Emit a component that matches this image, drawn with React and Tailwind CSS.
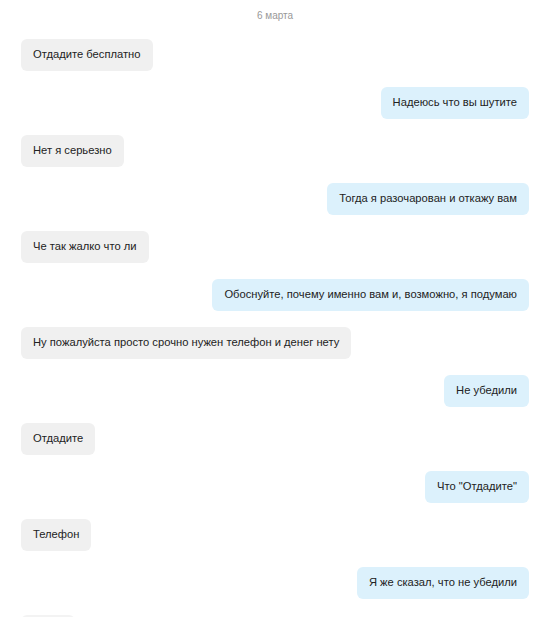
const messages = [
  { text: 'Отдадите бесплатно', mine: false },
  { text: 'Надеюсь что вы шутите', mine: true },
  { text: 'Нет я серьезно', mine: false },
  { text: 'Тогда я разочарован и откажу вам', mine: true },
  { text: 'Че так жалко что ли', mine: false },
  { text: 'Обоснуйте, почему именно вам и, возможно, я подумаю', mine: true },
  { text: 'Ну пожалуйста просто срочно нужен телефон и денег нету', mine: false },
  { text: 'Не убедили', mine: true },
  { text: 'Отдадите', mine: false },
  { text: 'Что "Отдадите"', mine: true },
  { text: 'Телефон', mine: false },
  { text: 'Я же сказал, что не убедили', mine: true },
]

const Bubble = ({ text, mine }) => (
  <div className={mine ? 'flex justify-end' : 'flex justify-start'}>
    <div
      className={
        'h-8 px-3 flex items-center rounded-md text-[11.2px] leading-none text-[#222] ' +
        (mine ? 'bg-[#dcf1fc]' : 'bg-[#f0f0f0]')
      }
    >
      {text}
    </div>
  </div>
)

export default function App() {
  return (
    <div className="w-[550px] h-[617px] overflow-hidden bg-white font-['Liberation_Sans',Arial,sans-serif]">
      <div className="pt-[10px] text-center text-[10px] leading-[12px] text-[#999]">6 марта</div>
      <div className="mt-[17px] px-[21px] flex flex-col gap-4">
        {messages.map((m, i) => (
          <Bubble key={i} text={m.text} mine={m.mine} />
        ))}
        {/* next message, cut off by the bottom edge */}
        <div className="w-[54px] h-8 rounded-md bg-[#f3f3f3]" />
      </div>
    </div>
  )
}
